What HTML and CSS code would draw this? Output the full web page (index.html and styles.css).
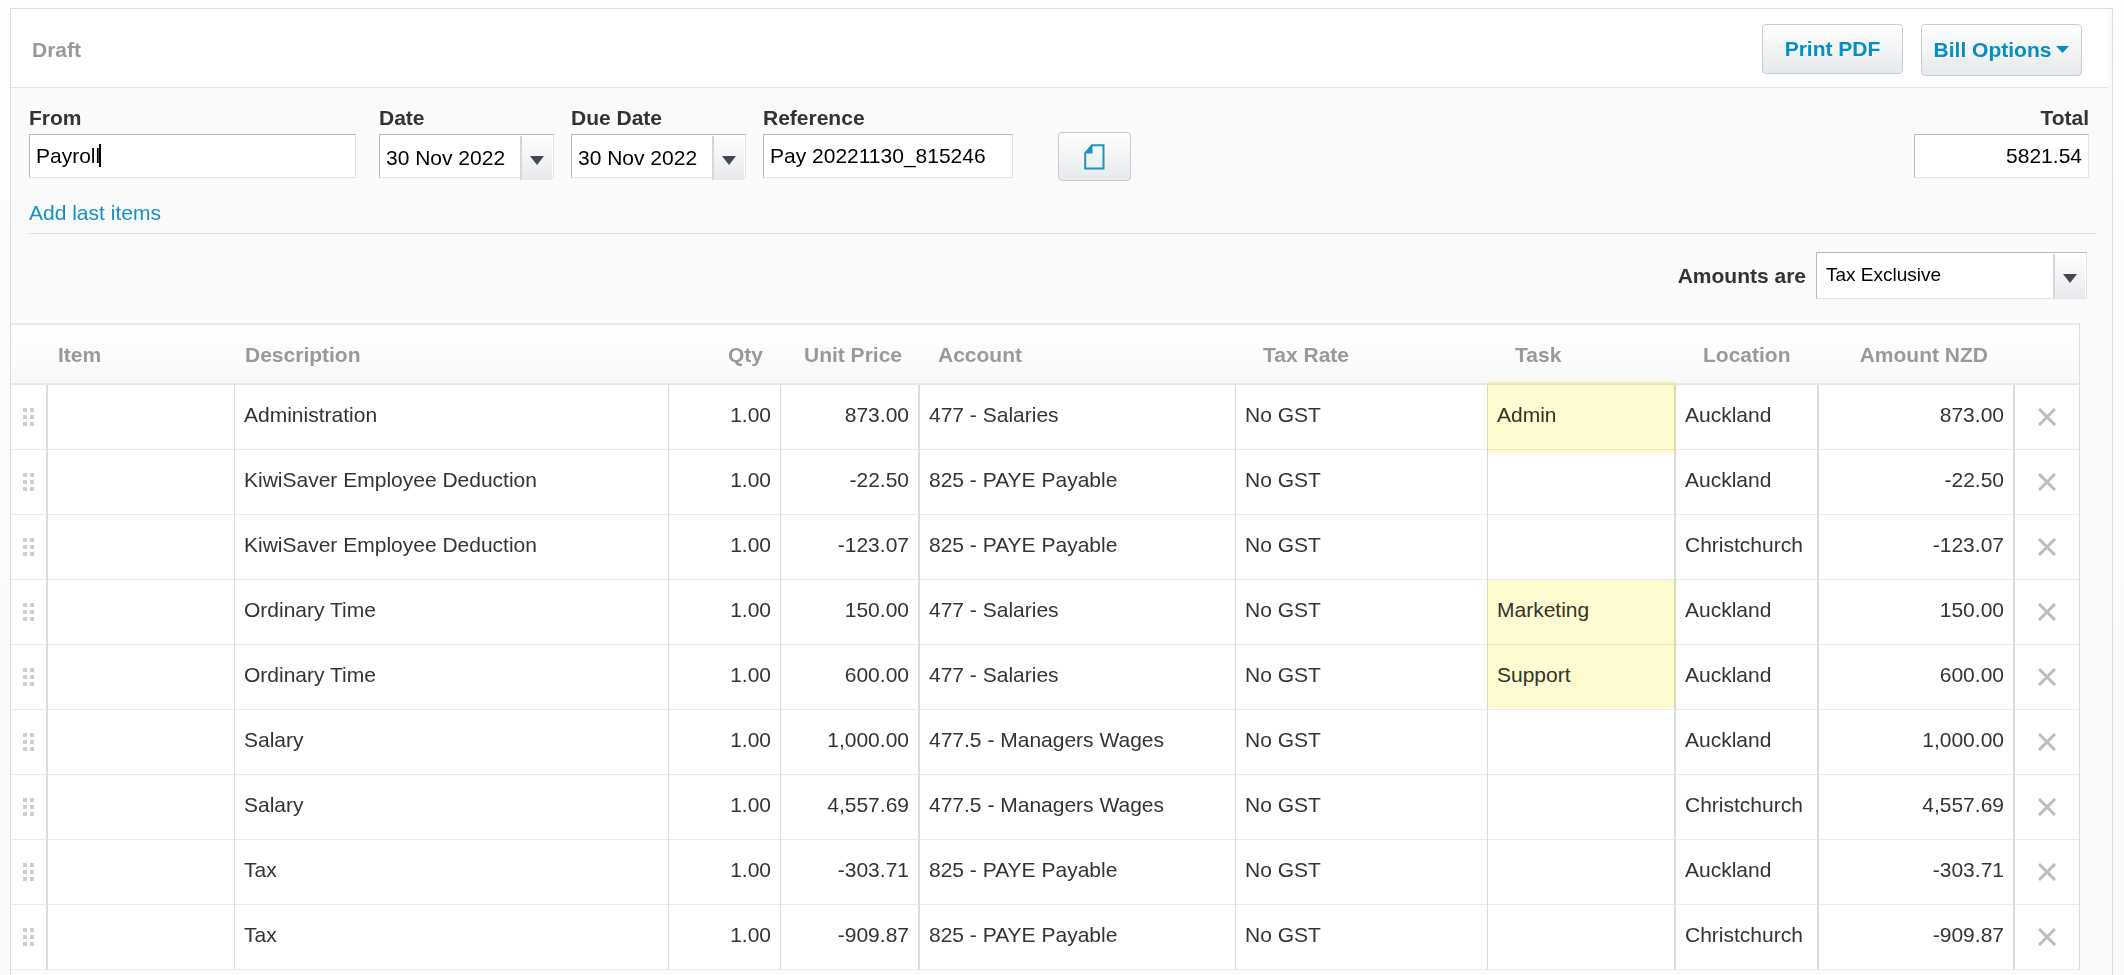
FILE: index.html
```
<!DOCTYPE html>
<html lang="en">
    <head>
        <title>Draft Bill</title>
        <meta charset="utf-8">
        <link rel="stylesheet" href="styles.css">
    </head>
    <body>
        <main class="panel">
            <header class="top">
                <h1>Draft</h1>
                <div class="actions">
                    <button type="button" class="button print">Print PDF</button>
                    <button type="button" class="button options">Bill Options
                        <svg width="13" height="7" viewBox="0 0 13 7"><path d="M0 0h13L6.5 7z" fill="#048fc2"/></svg>
                    </button>
                </div>
            </header>
            <form class="bill">
                <div class="fields">
                    <div class="field from">
                        <label for="from">From</label>
                        <div class="caret-box">
                            <input type="text" id="from" class="text" value="Payroll">
                            <span class="caret"></span>
                        </div>
                    </div>
                    <div class="field date">
                        <label for="date">Date</label>
                        <div class="combo">
                            <input type="text" id="date" value="30 Nov 2022">
                            <button type="button" class="drop" aria-label="Pick date"><svg width="14" height="9" viewBox="0 0 14 9"><path d="M0 0h14L7 9z" fill="#434a54"/></svg></button>
                        </div>
                    </div>
                    <div class="field date">
                        <label for="due">Due Date</label>
                        <div class="combo">
                            <input type="text" id="due" value="30 Nov 2022">
                            <button type="button" class="drop" aria-label="Pick due date"><svg width="14" height="9" viewBox="0 0 14 9"><path d="M0 0h14L7 9z" fill="#434a54"/></svg></button>
                        </div>
                    </div>
                    <div class="field ref">
                        <label for="ref">Reference</label>
                        <input type="text" id="ref" class="text" value="Pay 20221130_815246">
                    </div>
                    <button type="button" class="button file" aria-label="Files">
                        <svg width="21" height="26" viewBox="0 0 21 26">
                            <path d="M8 1.2H19.5V24.5H1.2V9z" fill="none" stroke="#1a94c0" stroke-width="2"/>
                            <path d="M8.5 1V9.5H1z" fill="#1a94c0"/>
                        </svg>
                    </button>
                    <div class="field total">
                        <label for="total">Total</label>
                        <input type="text" id="total" class="text" value="5821.54">
                    </div>
                </div>
                <a href="#" class="last">Add last items</a>
            </form>
            <div class="amounts">
                <label for="amounts">Amounts are</label>
                <div class="select">
                    <select id="amounts">
                        <option>Tax Exclusive</option>
                        <option>Tax Inclusive</option>
                        <option>No Tax</option>
                    </select>
                    <span class="drop"><svg width="14" height="9" viewBox="0 0 14 9"><path d="M0 0h14L7 9z" fill="#434a54"/></svg></span>
                </div>
            </div>
            <svg class="defs" width="0" height="0">
                <symbol id="grip" viewBox="0 0 11 18">
                    <path d="M0 0h4v4H0zM7 0h4v4H7zM0 7h4v4H0zM7 7h4v4H7zM0 14h4v4H0zM7 14h4v4H7z" fill="#cdcdcd"/>
                </symbol>
                <symbol id="cross" viewBox="0 0 18 18">
                    <path d="M1 1L17 17M17 1L1 17" stroke="#bdbdbd" stroke-width="3" fill="none"/>
                </symbol>
            </svg>
            <table class="lines">
                <colgroup>
                    <col class="c-grip"><col class="c-item"><col class="c-desc"><col class="c-qty"><col class="c-price"><col class="c-account"><col class="c-tax"><col class="c-task"><col class="c-location"><col class="c-amount"><col class="c-delete">
                </colgroup>
                <thead>
                    <tr>
                        <th></th>
                        <th>Item</th>
                        <th>Description</th>
                        <th class="num mid">Qty</th>
                        <th class="num mid">Unit Price</th>
                        <th class="mid">Account</th>
                        <th class="wide">Tax Rate</th>
                        <th class="wide">Task</th>
                        <th class="wide">Location</th>
                        <th class="num wide">Amount NZD</th>
                        <th></th>
                    </tr>
                </thead>
                <tbody>
                    <tr>
                        <td class="icon thick"><button type="button" aria-label="Move"><svg width="11" height="18"><use href="#grip"/></svg></button></td>
                        <td></td>
                        <td>Administration</td>
                        <td class="num">1.00</td>
                        <td class="num thick">873.00</td>
                        <td>477 - Salaries</td>
                        <td>No GST</td>
                        <td class="thick marked single">Admin</td>
                        <td class="thick">Auckland</td>
                        <td class="num thick">873.00</td>
                        <td class="icon"><button type="button" aria-label="Delete"><svg width="18" height="18"><use href="#cross"/></svg></button></td>
                    </tr>
                    <tr>
                        <td class="icon thick"><button type="button" aria-label="Move"><svg width="11" height="18"><use href="#grip"/></svg></button></td>
                        <td></td>
                        <td>KiwiSaver Employee Deduction</td>
                        <td class="num">1.00</td>
                        <td class="num thick">-22.50</td>
                        <td>825 - PAYE Payable</td>
                        <td>No GST</td>
                        <td class="thick"></td>
                        <td class="thick">Auckland</td>
                        <td class="num thick">-22.50</td>
                        <td class="icon"><button type="button" aria-label="Delete"><svg width="18" height="18"><use href="#cross"/></svg></button></td>
                    </tr>
                    <tr>
                        <td class="icon thick"><button type="button" aria-label="Move"><svg width="11" height="18"><use href="#grip"/></svg></button></td>
                        <td></td>
                        <td>KiwiSaver Employee Deduction</td>
                        <td class="num">1.00</td>
                        <td class="num thick">-123.07</td>
                        <td>825 - PAYE Payable</td>
                        <td>No GST</td>
                        <td class="thick"></td>
                        <td class="thick">Christchurch</td>
                        <td class="num thick">-123.07</td>
                        <td class="icon"><button type="button" aria-label="Delete"><svg width="18" height="18"><use href="#cross"/></svg></button></td>
                    </tr>
                    <tr>
                        <td class="icon thick"><button type="button" aria-label="Move"><svg width="11" height="18"><use href="#grip"/></svg></button></td>
                        <td></td>
                        <td>Ordinary Time</td>
                        <td class="num">1.00</td>
                        <td class="num thick">150.00</td>
                        <td>477 - Salaries</td>
                        <td>No GST</td>
                        <td class="thick marked">Marketing</td>
                        <td class="thick">Auckland</td>
                        <td class="num thick">150.00</td>
                        <td class="icon"><button type="button" aria-label="Delete"><svg width="18" height="18"><use href="#cross"/></svg></button></td>
                    </tr>
                    <tr>
                        <td class="icon thick"><button type="button" aria-label="Move"><svg width="11" height="18"><use href="#grip"/></svg></button></td>
                        <td></td>
                        <td>Ordinary Time</td>
                        <td class="num">1.00</td>
                        <td class="num thick">600.00</td>
                        <td>477 - Salaries</td>
                        <td>No GST</td>
                        <td class="thick marked last-marked">Support</td>
                        <td class="thick">Auckland</td>
                        <td class="num thick">600.00</td>
                        <td class="icon"><button type="button" aria-label="Delete"><svg width="18" height="18"><use href="#cross"/></svg></button></td>
                    </tr>
                    <tr>
                        <td class="icon thick"><button type="button" aria-label="Move"><svg width="11" height="18"><use href="#grip"/></svg></button></td>
                        <td></td>
                        <td>Salary</td>
                        <td class="num">1.00</td>
                        <td class="num thick">1,000.00</td>
                        <td>477.5 - Managers Wages</td>
                        <td>No GST</td>
                        <td class="thick"></td>
                        <td class="thick">Auckland</td>
                        <td class="num thick">1,000.00</td>
                        <td class="icon"><button type="button" aria-label="Delete"><svg width="18" height="18"><use href="#cross"/></svg></button></td>
                    </tr>
                    <tr>
                        <td class="icon thick"><button type="button" aria-label="Move"><svg width="11" height="18"><use href="#grip"/></svg></button></td>
                        <td></td>
                        <td>Salary</td>
                        <td class="num">1.00</td>
                        <td class="num thick">4,557.69</td>
                        <td>477.5 - Managers Wages</td>
                        <td>No GST</td>
                        <td class="thick"></td>
                        <td class="thick">Christchurch</td>
                        <td class="num thick">4,557.69</td>
                        <td class="icon"><button type="button" aria-label="Delete"><svg width="18" height="18"><use href="#cross"/></svg></button></td>
                    </tr>
                    <tr>
                        <td class="icon thick"><button type="button" aria-label="Move"><svg width="11" height="18"><use href="#grip"/></svg></button></td>
                        <td></td>
                        <td>Tax</td>
                        <td class="num">1.00</td>
                        <td class="num thick">-303.71</td>
                        <td>825 - PAYE Payable</td>
                        <td>No GST</td>
                        <td class="thick"></td>
                        <td class="thick">Auckland</td>
                        <td class="num thick">-303.71</td>
                        <td class="icon"><button type="button" aria-label="Delete"><svg width="18" height="18"><use href="#cross"/></svg></button></td>
                    </tr>
                    <tr>
                        <td class="icon thick"><button type="button" aria-label="Move"><svg width="11" height="18"><use href="#grip"/></svg></button></td>
                        <td></td>
                        <td>Tax</td>
                        <td class="num">1.00</td>
                        <td class="num thick">-909.87</td>
                        <td>825 - PAYE Payable</td>
                        <td>No GST</td>
                        <td class="thick"></td>
                        <td class="thick">Christchurch</td>
                        <td class="num thick">-909.87</td>
                        <td class="icon"><button type="button" aria-label="Delete"><svg width="18" height="18"><use href="#cross"/></svg></button></td>
                    </tr>
                </tbody>
            </table>
        </main>
    </body>
</html>
```
FILE: styles.css
```
*{
    box-sizing: border-box;
}
body{
    display: flex;
    min-height: 100vh;
    margin: 0;
    padding: 8px 11px 0 10px;
    background: linear-gradient(#fefefe, #f9f9f9);
    color: #333;
    font-family: "Liberation Sans", Arial, sans-serif;
    font-size: 21px;
    line-height: 24px;
}
input, select, button{
    font: inherit;
    color: #000;
}
label{
    font-weight: bold;
}
svg{
    display: block;
    flex: none;
}
.defs{
    position: absolute;
}
.panel{
    flex: 1;
    min-width: 0;
    border: solid #dcdcdc 1px;
    border-bottom: 0;
    background-color: #fafafa;
}

/* header */
.top{
    display: flex;
    justify-content: space-between;
    align-items: center;
    height: 79px;
    margin-right: 4px;
    padding: 3px 26px 0 21px;
    background-color: white;
    border-bottom: solid #e5e5e5 1px;
}
h1{
    margin: 0;
    color: #999;
    font-size: 21px;
}
.actions{
    display: flex;
    align-items: flex-start;
    gap: 18px;
}
.button{
    display: flex;
    justify-content: center;
    align-items: center;
    padding: 0;
    background: linear-gradient(#fefefe, #e6eaec);
    color: #048fc2;
    font-weight: bold;
    border: solid #c9cdd1 1px;
    border-radius: 4px;
}
.print{
    width: 141px;
    height: 50px;
}
.options{
    gap: 5px;
    width: 161px;
    height: 52px;
}

/* bill details */
.bill{
    margin: 0 15px 0 18px;
    padding: 18px 0 8px;
    border-bottom: solid #e0e0e0 1px;
}
.fields{
    display: flex;
    align-items: flex-end;
    gap: 17px;
    margin-bottom: 23px;
}
.field{
    display: flex;
    flex-direction: column;
    gap: 4px;
}
.from{
    width: 327px;
    margin-right: 6px;
}
.date{
    width: 175px;
}
.ref{
    width: 250px;
}
.total{
    width: 175px;
    margin: 0 8px 0 auto;
    text-align: right;
}
.total .text{
    text-align: right;
}
.text, .combo, .select{
    width: 100%;
    height: 44px;
    background-color: white;
    border: solid 1px;
    border-color: #b5b8bc #e2e4e6 #e2e4e6 #b5b8bc;
    border-radius: 0;
}
.text{
    padding: 0 6px;
}
.combo{
    display: flex;
}
.combo input{
    flex: 1;
    min-width: 0;
    height: 44px;
    padding: 2px 0 0 6px;
    background: none;
    border: 0;
}
.drop{
    display: flex;
    justify-content: center;
    align-items: center;
    width: 32px;
    height: 44px;
    margin: 1px 1px 0 0;
    padding: 5px 0 0;
    background: linear-gradient(#fefefe, #e7e9ec);
    border: 0;
    border-left: solid #d3d7de 2px;
}
.file{
    width: 73px;
    height: 49px;
    margin: 0 0 -3px 28px;
}
.caret-box{
    position: relative;
}
.caret{
    position: absolute;
    top: 10px;
    left: 70px;
    width: 2px;
    height: 23px;
    background-color: black;
}
a{
    color: #178fc4;
    text-decoration: none;
}
.last{
    display: block;
}

/* tax type */
.amounts{
    display: flex;
    justify-content: flex-end;
    align-items: center;
    gap: 10px;
    padding: 18px 25px 24px 0;
}
.select{
    position: relative;
    width: 271px;
    height: 47px;
}
.select select{
    width: 100%;
    height: 44px;
    padding: 0 40px 0 9px;
    appearance: none;
    background: none;
    border: 0;
    font-size: 19px;
}
.select .drop{
    position: absolute;
    top: 0;
    right: 0;
    pointer-events: none;
}

/* bill lines */
.lines{
    width: calc(100% - 32px);
    table-layout: fixed;
    border-collapse: separate;
    border-spacing: 0;
}
.c-grip{ width: 37px; }
.c-item{ width: 187px; }
.c-qty{ width: 112px; }
.c-price{ width: 139px; }
.c-account{ width: 316px; }
.c-tax{ width: 252px; }
.c-task{ width: 188px; }
.c-location{ width: 143px; }
.c-amount{ width: 196px; }
.c-delete{ width: 65px; }
thead tr{
    background: linear-gradient(#fff, #f8f8f8);
}
th{
    padding: 18px 10px 16px;
    border: solid #e8e8e8;
    border-width: 2px 0;
    color: #999;
    text-align: left;
}
th:last-child{
    border-right: solid #dcdcdc 1px;
}
th.mid{
    padding-left: 18px;
    padding-right: 18px;
}
th.wide{
    padding-left: 27px;
    padding-right: 27px;
}
td{
    height: 65px;
    padding: 18px 9px 22px;
    background-color: white;
    border-right: solid #dcdcdc 1px;
    border-bottom: solid #ebebeb 1px;
    vertical-align: top;
    white-space: nowrap;
}
.num{
    text-align: right;
}
td.thick{
    border-right-width: 2px;
}
td.icon{
    padding: 0;
    vertical-align: middle;
}
.icon button{
    display: block;
    margin: auto;
    padding: 0;
    background: none;
    border: 0;
}
/* highlighter over the task names */
.marked{
    position: relative;
}
.marked::after{
    content: "";
    position: absolute;
    top: 0;
    right: -2px;
    bottom: -1px;
    left: -1px;
    background-color: #fffbd0;
    mix-blend-mode: multiply;
}
.single::after{
    top: -4px;
    bottom: -4px;
}
.last-marked::after{
    bottom: 1px;
}
```
